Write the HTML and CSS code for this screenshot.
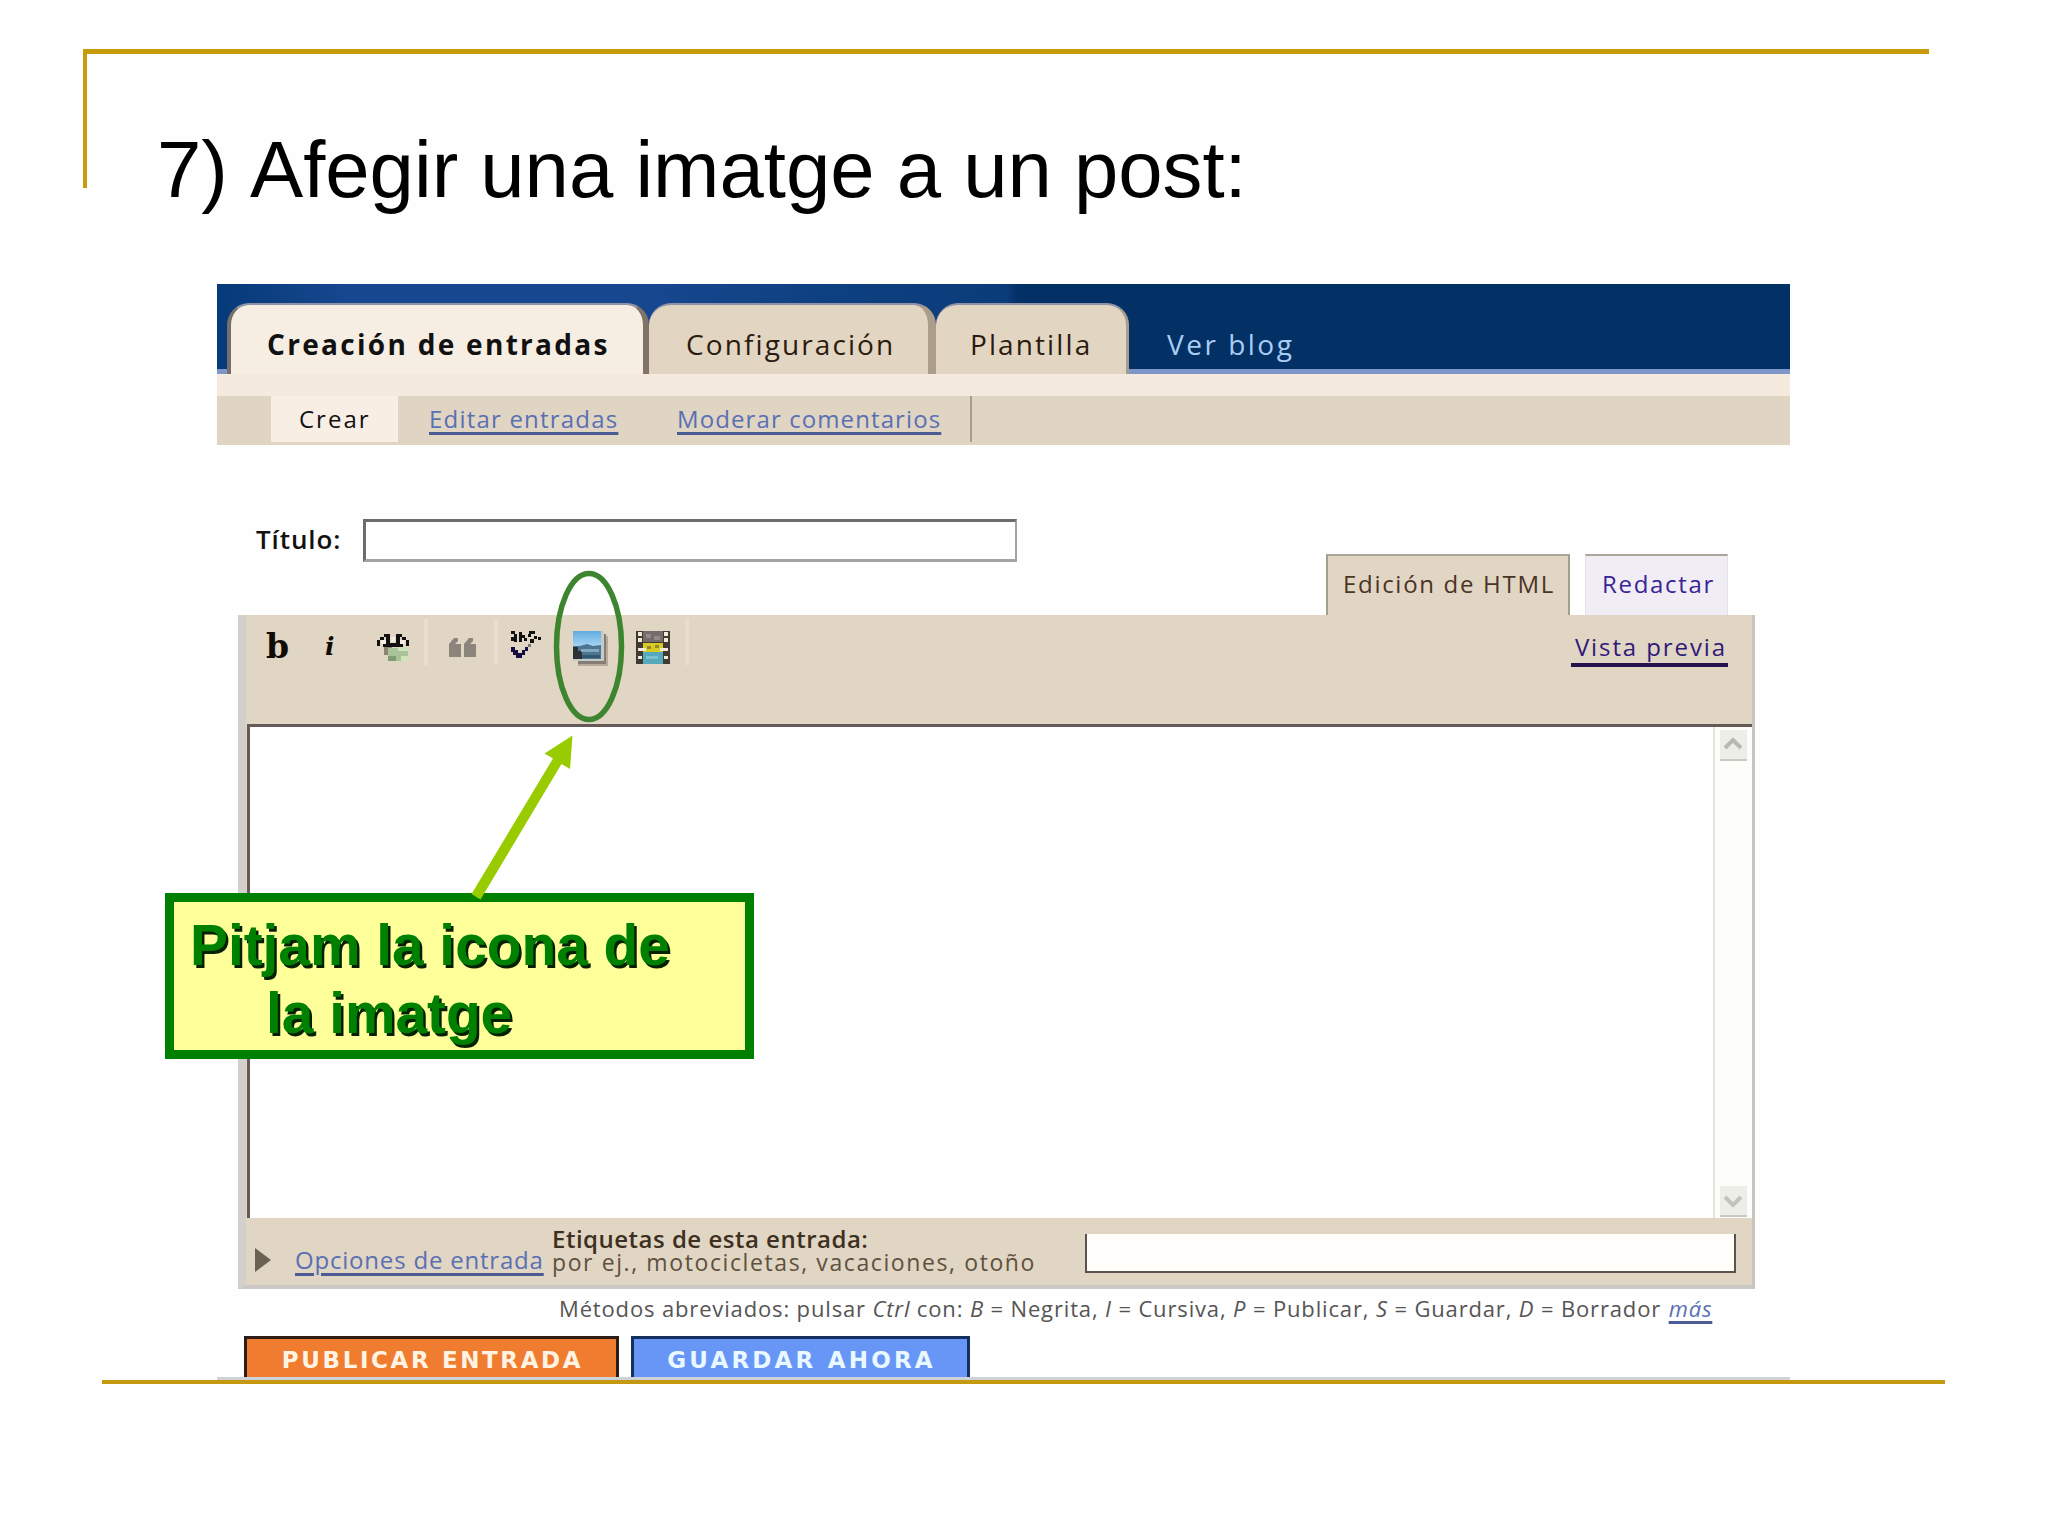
FILE: index.html
```html
<!DOCTYPE html>
<html lang="ca">
<head>
    <meta charset="utf-8">
    <title>Afegir una imatge a un post</title>
    <link rel="stylesheet" href="styles.css">
</head>
<body>
<div class="slide">
    <div class="frame-top">
        <h1>7) Afegir una imatge a un post:</h1>
    </div>

    <div class="blogger">
        <div class="tabs">
            <a class="tab active">Creación de entradas</a>
            <a class="tab config">Configuración</a>
            <a class="tab template">Plantilla</a>
            <a class="view-blog">Ver blog</a>
        </div>
        <div class="subnav">
            <span class="current">Crear</span>
            <a class="link edit">Editar entradas</a>
            <a class="link moderate">Moderar comentarios</a>
            <span class="divider"></span>
        </div>

        <div class="title-row">
            <label for="title">Título:</label>
            <input type="text" id="title" class="title-input">
            <div class="modes">
                <span class="mode html">Edición de HTML</span>
                <span class="mode compose">Redactar</span>
            </div>
        </div>

        <div class="editor">
            <div class="toolbar">
                <span class="btn-bold">b</span>
                <span class="btn-italic">i</span>
                <svg class="icon globe" viewBox="0 0 32 32">
                    <path d="M7 3h6v3H7zM19 3h6v3h-6zM3 6h4v3H3zM25 6h4v3h-4zM0 9h3v6H0zM29 9h3v6h-3zM9 6h4v6h6V6h4v6h3v4H6v-4h3z" fill="#111"/>
                    <path d="M4 9h5v4H4zM23 9h5v4h-5zM14 6h4v5h-4z" fill="#f3ece1"/>
                    <path d="M7 16h8v8H7z" fill="#8c8472"/>
                    <path d="M11 17h20v13H11z" fill="#a9c398"/>
                    <path d="M11 25h8v5h-8z" fill="#7f9c72"/>
                    <path d="M21 16h10v4H21zM24 25h7v5h-7z" fill="#cfe3b8"/>
                </svg>
                <span class="sep"></span>
                <svg class="icon quote" viewBox="0 0 32 32">
                    <path d="M2 26V13l5-6h4v3l-3 3h6v13zM17 26V13l5-6h4v3l-3 3h6v13z" fill="#8b857c"/>
                </svg>
                <span class="sep"></span>
                <svg class="icon spell" viewBox="0 0 32 32">
                    <path d="M1 0h4v3H1zM4 3h3v8H4zM1 6h3v4H1zM9 1h3v10H9zM12 4h3v3h-3zM14 7h3v3h-3zM19 0h6v3h-6zM18 3h3v3h-3zM20 8h4v4h-4zM24 5h3v3h-3zM28 6h3v3h-3z" fill="#111"/>
                    <path d="M1 16h4v3h3v3h4v-3h3v-3h3v4h-3v4h-3v3H6v-3H3v-3H1z" fill="#140c42"/>
                    <path d="M18 13h3v3h-3z" fill="#777"/>
                </svg>
                <svg class="icon image" viewBox="0 0 36 36">
                    <defs>
                        <linearGradient id="sky" x1="0" y1="0" x2="0" y2="1">
                            <stop offset="0" stop-color="#62abe0"/>
                            <stop offset="1" stop-color="#a9d6f5"/>
                        </linearGradient>
                    </defs>
                    <path d="M5 5h30v30H5z" fill="#b5aa9c"/>
                    <path d="M5 3h28v30H5z" fill="#857d75"/>
                    <path d="M0 0h31v30H0z" fill="#c6cbc8"/>
                    <path d="M0 0h28v16H0z" fill="url(#sky)"/>
                    <path d="M0 15h7l7-2 6 2 8-1v14H0z" fill="#4b7591"/>
                    <path d="M0 16h5v4h4v8H0z" fill="#2b3135"/>
                    <path d="M8 18h18v3H8z" fill="#84a8bb"/>
                    <path d="M9 24h18v3H9z" fill="#34586f"/>
                </svg>
                <svg class="icon film" viewBox="0 0 34 33">
                    <path d="M0 0h34v33H0z" fill="#403a33"/>
                    <path d="M7 0h20v11H7z" fill="#756b6a"/>
                    <path d="M10 3h5v4h-5zM18 5h6v4h-6z" fill="#938a88"/>
                    <path d="M7 12h20v9H7z" fill="#d8cc24"/>
                    <path d="M11 15h4v3h-4zM19 14h4v3h-4z" fill="#94882a"/>
                    <path d="M7 21h20v12H7z" fill="#54a9bd"/>
                    <path d="M10 25h12v3H10z" fill="#7cc0cf"/>
                    <path d="M2 1h4v4H2zM2 7h4v4H2zM2 17h8v3H2zM2 25h4v3H2zM28 1h4v4h-4zM28 7h4v4h-4zM24 17h8v3h-8zM28 25h4v3h-4z" fill="#f1ead9"/>
                </svg>
                <span class="sep"></span>
                <a class="preview">Vista previa</a>
            </div>

            <div class="textarea">
                <div class="scrollbar">
                    <span class="scroll-btn"><svg viewBox="0 0 27 28"><path d="M5 18l8-8 8 8" fill="none" stroke="#b9b9b2" stroke-width="4"/></svg></span>
                    <span class="scroll-btn"><svg viewBox="0 0 27 28"><path d="M5 11l8 8 8-8" fill="none" stroke="#c3c3bc" stroke-width="4"/></svg></span>
                </div>
            </div>

            <div class="options">
                <svg class="toggle" viewBox="0 0 16 24"><path d="M0 0l16 12L0 24z" fill="#6b6253"/></svg>
                <a class="post-options"><span class="link">Opciones de entrada</span></a>
                <div class="labels">
                    <div class="labels-title">Etiquetas de esta entrada:</div>
                    <div class="labels-hint">por ej., motocicletas, vacaciones, otoño</div>
                </div>
                <input type="text" class="labels-input">
            </div>
        </div>

        <p class="shortcuts">Métodos abreviados: pulsar <i>Ctrl</i> con: <i>B</i> = Negrita, <i>I</i> = Cursiva, <i>P</i> = Publicar, <i>S</i> = Guardar, <i>D</i> = Borrador <a class="link"><i>más</i></a></p>

        <div class="actions">
            <button class="publish">PUBLICAR ENTRADA</button>
            <button class="save">GUARDAR AHORA</button>
        </div>
    </div>
    <div class="frame-bottom"></div>

    <svg class="pointer" viewBox="0 0 180 340">
        <ellipse cx="129" cy="86.5" rx="32.5" ry="73" fill="none" stroke="#3e8530" stroke-width="5.5"/>
        <path d="M11.500 334L93 198.500 84.500 193.500 112.500 175.500 110 209 101.500 204 20.500 339.500z" fill="#99cc00"/>
    </svg>
    <div class="callout">Pitjam la icona de<br>la imatge</div>
</div>
</body>
</html>
```
FILE: styles.css
```css
body {
    margin: 0;
    background-color: #fefefe;
    font-family: "Open Sans", sans-serif;
}

.slide {
    position: relative;
    box-sizing: border-box;
    width: 2048px;
    height: 1536px;
    padding-top: 49px;
    overflow: hidden;
}

.frame-top {
    box-sizing: border-box;
    width: 1846px;
    height: 139px;
    margin-left: 83px;
    border-top: 5px solid #c89b0c;
    border-left: 4px solid #c89b0c;
    padding: 70px 0 0 70px;
}

h1 {
    margin: 0;
    font: 79.7px/92px "Liberation Sans", sans-serif;
    font-kerning: none;
    color: #000;
}

.blogger {
    width: 1573px;
    height: 1096px;
    margin: 96px 0 0 217px;
    font-size: 24px;
}

/* main tabs */
.tabs {
    display: flex;
    box-sizing: border-box;
    height: 90px;
    padding: 19px 0 0 10px;
    border-bottom: 5px solid #7f97c8;
    background: linear-gradient(90deg, #053a78 0, #17478f 130px, #17478f 430px, #0d4080 620px, #0b3c7a 790px, #033166 800px);
}

.tab {
    box-sizing: border-box;
    height: 71px;
    padding-top: 10px;
    border-top: 2px solid #8e93a8;
    border-radius: 22px 22px 0 0;
    background-color: #e2d5c1;
    font-size: 28px;
    line-height: 58px;
    letter-spacing: 2.1px;
    color: #2b1a10;
}

.tab.active {
    width: 422px;
    padding-left: 36px;
    border-left: 4px solid #77706a;
    border-right: 6px solid #807468;
    background-color: #f6ede3;
    font-weight: bold;
    letter-spacing: 2.3px;
    color: #111;
}

.config {
    width: 287px;
    padding-left: 37px;
    border-right: 8px solid #ab9d89;
}

.template {
    width: 193px;
    padding-left: 34px;
    border-right: 3px solid #a59c92;
}

.view-blog {
    padding: 10px 0 0 38px;
    font-size: 28px;
    line-height: 62px;
    letter-spacing: 2.5px;
    color: #a9cdf3;
}

.subnav {
    display: flex;
    box-sizing: border-box;
    height: 71px;
    padding-left: 54px;
    border-top: 22px solid #f5eade;
    background-color: #e0d4c2;
    line-height: 45px;
    letter-spacing: 1.2px;
    white-space: nowrap;
}

.current {
    width: 99px;
    height: 46px;
    padding-left: 28px;
    background-color: #f8eee4;
    letter-spacing: 2px;
    color: #111;
}

.link {
    color: #5a70b4;
    text-decoration: underline 3px #4b5c94;
    text-underline-offset: 4px;
}

.edit {
    width: 190px;
    margin-left: 31px;
}

.moderate {
    width: 265px;
    margin-left: 58px;
    letter-spacing: 1.1px;
}

.divider {
    width: 2px;
    height: 46px;
    margin-left: 28px;
    background-color: #a89c8b;
}

/* post title and editor modes */
.title-row {
    display: flex;
    align-items: flex-start;
    height: 170px;
    padding-left: 39px;
}

label {
    width: 107px;
    margin-top: 74px;
    font-size: 26px;
    font-weight: 600;
    line-height: 40px;
    letter-spacing: 0.9px;
    color: #111;
}

.title-input {
    box-sizing: border-box;
    width: 654px;
    height: 43px;
    margin-top: 74px;
    padding: 0;
    border: 3px solid #6e6b70;
    border-right: 2px solid #a5a3a6;
    border-bottom-color: #a5a3a6;
    background-color: #fff;
}

.modes {
    display: flex;
    gap: 15px;
    margin: 109px 0 0 309px;
    letter-spacing: 1.7px;
}

.mode {
    box-sizing: border-box;
    height: 61px;
    border-top: 2px solid #aaa59b;
    line-height: 55px;
    white-space: nowrap;
}

.html {
    width: 244px;
    padding-left: 15px;
    border-left: 2px solid #a39e90;
    border-right: 2px solid #a39e90;
    background-color: #e1d5c3;
    color: #4a3425;
}

.compose {
    width: 143px;
    padding-left: 16px;
    border-left: 1px solid #e4e0e8;
    border-right: 1px solid #e4e0e8;
    background-color: #f1edf4;
    color: #3a2396;
}

.editor {
    box-sizing: border-box;
    width: 1517px;
    height: 674px;
    margin-left: 21px;
    border-left: 8px solid #d3cfcb;
    border-right: 3px solid #c9c5bd;
    border-bottom: 4px solid #cbc7c5;
    background-color: #e1d5c3;
}

.toolbar {
    display: flex;
    align-items: flex-start;
    box-sizing: border-box;
    height: 109px;
    padding: 16px 24px 0 20px;
}

.btn-bold,
.btn-italic {
    width: 32px;
    font: bold 33px/32px "DejaVu Serif", serif;
    color: #120a05;
}

.btn-italic {
    margin-left: 27px;
    font-size: 25px;
    font-style: italic;
}

.icon {
    width: 32px;
    height: 32px;
}

.globe { margin-left: 20px; }
.quote { margin-left: 19px; }
.spell { margin-left: 12px; }

.image {
    width: 36px;
    height: 36px;
    margin-left: 31px;
}

.film {
    width: 34px;
    height: 33px;
    margin-left: 27px;
}

.sep {
    width: 4px;
    height: 46px;
    margin: -12px 0 0 15px;
    background-color: #e9decd;
}

.preview {
    margin-left: auto;
    padding: 0 1px 0 4px;
    border-bottom: 4px solid #24124e;
    line-height: 32px;
    letter-spacing: 1.9px;
    color: #2f1a78;
}

.textarea {
    display: flex;
    justify-content: flex-end;
    box-sizing: border-box;
    height: 494px;
    margin-left: 1px;
    border-top: 3px solid #655a57;
    border-left: 3px solid #655a57;
    background-color: #fff;
}

.scrollbar {
    display: flex;
    flex-direction: column;
    justify-content: space-between;
    align-items: center;
    box-sizing: border-box;
    width: 39px;
    padding: 3px 0 1px;
    border-left: 2px solid #e4e2dd;
    background-color: #fdfdfa;
}

.scroll-btn {
    width: 27px;
    height: 29px;
    border-bottom: 2px solid #cbcac2;
    background-color: #eeeee9;
}

/* labels and options under the text */
.options {
    display: flex;
    height: 67px;
    padding-left: 9px;
}

.toggle {
    width: 16px;
    height: 24px;
    margin-top: 30px;
}

.post-options {
    width: 249px;
    margin-left: 24px;
    padding-top: 22px;
    line-height: 40px;
    letter-spacing: 0.8px;
    white-space: nowrap;
}

.labels {
    width: 533px;
    margin-left: 8px;
    color: #5e5140;
}

.labels-title {
    padding-top: 11px;
    font-weight: 600;
    line-height: 20px;
    letter-spacing: 0.5px;
    color: #3d3022;
}

.labels-hint {
    font-size: 23px;
    line-height: 26px;
    letter-spacing: 1.6px;
}

.labels-input {
    box-sizing: border-box;
    width: 651px;
    height: 39px;
    margin-top: 16px;
    padding: 0;
    border: 2px solid #5b524d;
    border-top: 0;
    background-color: #fffefb;
}

.shortcuts {
    margin: 0 0 0 342px;
    height: 47px;
    font-size: 22px;
    line-height: 38px;
    letter-spacing: 0.85px;
    color: #555;
    white-space: nowrap;
}

.shortcuts .link {
    margin-left: 1px;
}

.actions {
    display: flex;
    gap: 12px;
    height: 41px;
    padding-left: 27px;
    border-bottom: 3px solid #ced1d6;
}

button {
    box-sizing: border-box;
    height: 41px;
    border: 3px solid #2b1d16;
    border-bottom: 0;
    padding: 5px 0 0 2px;
    font: bold 23px/33px "DejaVu Sans", sans-serif;
    letter-spacing: 2.6px;
    color: #fff4e4;
    white-space: nowrap;
}

.publish {
    width: 375px;
    background-color: #f07c30;
}

.save {
    width: 339px;
    border-color: #16305e;
    background-color: #6796f7;
    letter-spacing: 3.2px;
    color: #eaf8ff;
}

.frame-bottom {
    width: 1843px;
    height: 4px;
    margin-left: 102px;
    background-color: #c4980f;
}

/* notes laid over the editor */
.pointer {
    position: absolute;
    left: 460px;
    top: 560px;
    width: 180px;
    height: 340px;
    z-index: 2;
}

.callout {
    position: absolute;
    left: 165px;
    top: 893px;
    box-sizing: border-box;
    width: 589px;
    height: 166px;
    padding: 10px 0 0 92px;
    border: 9px solid #008000;
    background-color: #ffff99;
    font: bold 56.8px/68px "Liberation Sans", sans-serif;
    text-indent: -76px;
    color: #008000;
    text-shadow: 2.5px 3px 0 #062006;
}
```
